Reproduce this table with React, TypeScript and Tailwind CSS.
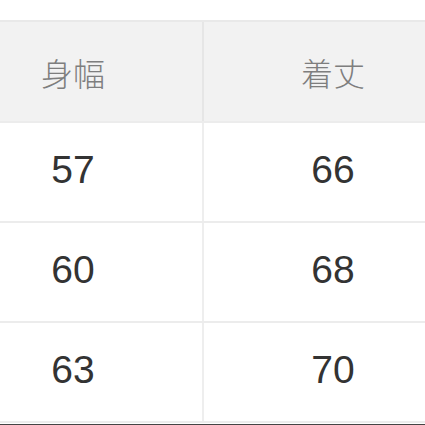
import React from "react";

const rows = [
  ["57", "66"],
  ["60", "68"],
  ["63", "70"],
];

export default function App() {
  return (
    <div className="w-[425px] h-[425px] overflow-hidden bg-white relative" style={{ fontFamily: '"Liberation Sans", "Noto Sans CJK JP", sans-serif' }}>
      <div className="pt-[20px] ml-[-56px] w-[520px]">
        <div className="flex h-[101px] bg-[#f2f2f2] border-t-2 border-[#e9e9e9]">
          <div className="w-[258px] flex items-center justify-center text-[32px] font-light text-[#7e7e7e]" style={{ fontFamily: '"Noto Sans CJK JP", sans-serif' }}>身幅</div>
          <div className="w-[2px] bg-[#e6e6e6]" />
          <div className="w-[258px] flex items-center justify-center text-[32px] font-light text-[#7e7e7e]" style={{ fontFamily: '"Noto Sans CJK JP", sans-serif' }}>着丈</div>
        </div>
        {rows.map((r, i) => (
          <div key={i} className="flex h-[100px] border-t-2 border-[#ececec]">
            <div className="w-[258px] flex items-center justify-center text-[39px] text-[#333333] pb-[3px]">{r[0]}</div>
            <div className="w-[2px] bg-[#eeeeee]" />
            <div className="w-[258px] flex items-center justify-center text-[39px] text-[#333333] pb-[3px]">{r[1]}</div>
          </div>
        ))}
        <div className="h-[2px] bg-[#ececec]" />
      </div>
      <div className="absolute left-0 right-0 bottom-0 h-[1px] bg-[#444]" />
    </div>
  );
}
